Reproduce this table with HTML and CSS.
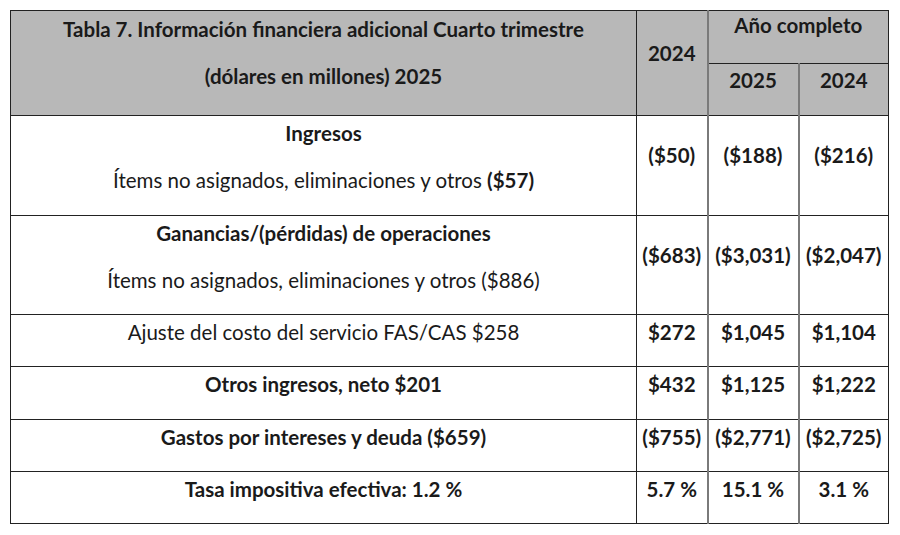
FILE: index.html
```
<!DOCTYPE html>
<html lang="es">
<head>
<meta charset="utf-8">
<link rel="stylesheet" href="styles.css">
</head>
<body>
<table class="fin">
  <colgroup>
    <col class="c1"><col class="c2"><col class="c3"><col class="c4">
  </colgroup>
  <thead>
    <tr class="h1">
      <th rowspan="2" class="title">
        <p>Tabla 7. Información financiera adicional Cuarto trimestre</p>
        <p>(dólares en millones) 2025</p>
      </th>
      <th rowspan="2" class="num mid"><p>2024</p></th>
      <th colspan="2" class="year soft"><p>Año completo</p></th>
    </tr>
    <tr class="h2">
      <th class="sub soft"><p>2025</p></th>
      <th class="sub soft"><p>2024</p></th>
    </tr>
  </thead>
  <tbody>
    <tr class="first">
      <td class="label"><p class="b">Ingresos</p><p>Ítems no asignados, eliminaciones y otros <b>($57)</b></p></td>
      <td class="num mid"><p class="b">($50)</p></td>
      <td class="num mid soft"><p class="b">($188)</p></td>
      <td class="num mid soft"><p class="b">($216)</p></td>
    </tr>
    <tr>
      <td class="label"><p class="b">Ganancias/(pérdidas) de operaciones</p><p>Ítems no asignados, eliminaciones y otros ($886)</p></td>
      <td class="num mid"><p class="b">($683)</p></td>
      <td class="num mid soft"><p class="b">($3,031)</p></td>
      <td class="num mid soft"><p class="b">($2,047)</p></td>
    </tr>
    <tr>
      <td class="label"><p>Ajuste del costo del servicio FAS/CAS $258</p></td>
      <td class="num"><p class="b">$272</p></td>
      <td class="num soft"><p class="b">$1,045</p></td>
      <td class="num soft"><p class="b">$1,104</p></td>
    </tr>
    <tr class="tall">
      <td class="label"><p class="b">Otros ingresos, neto $201</p></td>
      <td class="num"><p class="b">$432</p></td>
      <td class="num soft"><p class="b">$1,125</p></td>
      <td class="num soft"><p class="b">$1,222</p></td>
    </tr>
    <tr>
      <td class="label"><p class="b">Gastos por intereses y deuda ($659)</p></td>
      <td class="num"><p class="b">($755)</p></td>
      <td class="num soft"><p class="b">($2,771)</p></td>
      <td class="num soft"><p class="b">($2,725)</p></td>
    </tr>
    <tr>
      <td class="label"><p class="b">Tasa impositiva efectiva: 1.2 %</p></td>
      <td class="num"><p class="b">5.7 %</p></td>
      <td class="num soft"><p class="b">15.1 %</p></td>
      <td class="num soft"><p class="b">3.1 %</p></td>
    </tr>
  </tbody>
</table>
</body>
</html>
```

FILE: styles.css
```
html, body {
  margin: 0;
  padding: 0;
  background: #ffffff;
}
body {
  font-family: Lato, "Open Sans", "Noto Sans", sans-serif;
  font-size: 20.5px;
  color: #1a1a1a;
}
.fin {
  margin: 10px 0 0 10px;
  border-collapse: collapse;
  table-layout: fixed;
  width: 878px;
}
.c1 { width: 626px; }
.c2 { width: 71px; }
.c3 { width: 91px; }
.c4 { width: 90px; }
.fin th, .fin td {
  border: 1px solid #222;
  padding: 4px 0 0 0;
  text-align: center;
  vertical-align: top;
  white-space: nowrap;
}
.fin th.soft, .fin td.soft {
  border-left: 2px solid #7a7a7a;
}
.fin thead th {
  background: #b8b8b8;
  font-weight: 700;
}
.fin p {
  margin: 0 0 21px 0;
  line-height: 26px;
}
.fin .b { font-weight: 700; }
.fin .mid { vertical-align: middle; padding-top: 0; }
.h1 { height: 53px; }
.h2 { height: 52px; }
.fin thead .title { padding-top: 5px; }
.fin thead .year { padding-top: 1px; }
.fin thead .sub { padding-top: 3px; }
.fin tbody tr { height: 52px; }
.fin tbody tr.tall { height: 53px; }
.fin tbody tr.first .label { padding-bottom: 1px; }
```
